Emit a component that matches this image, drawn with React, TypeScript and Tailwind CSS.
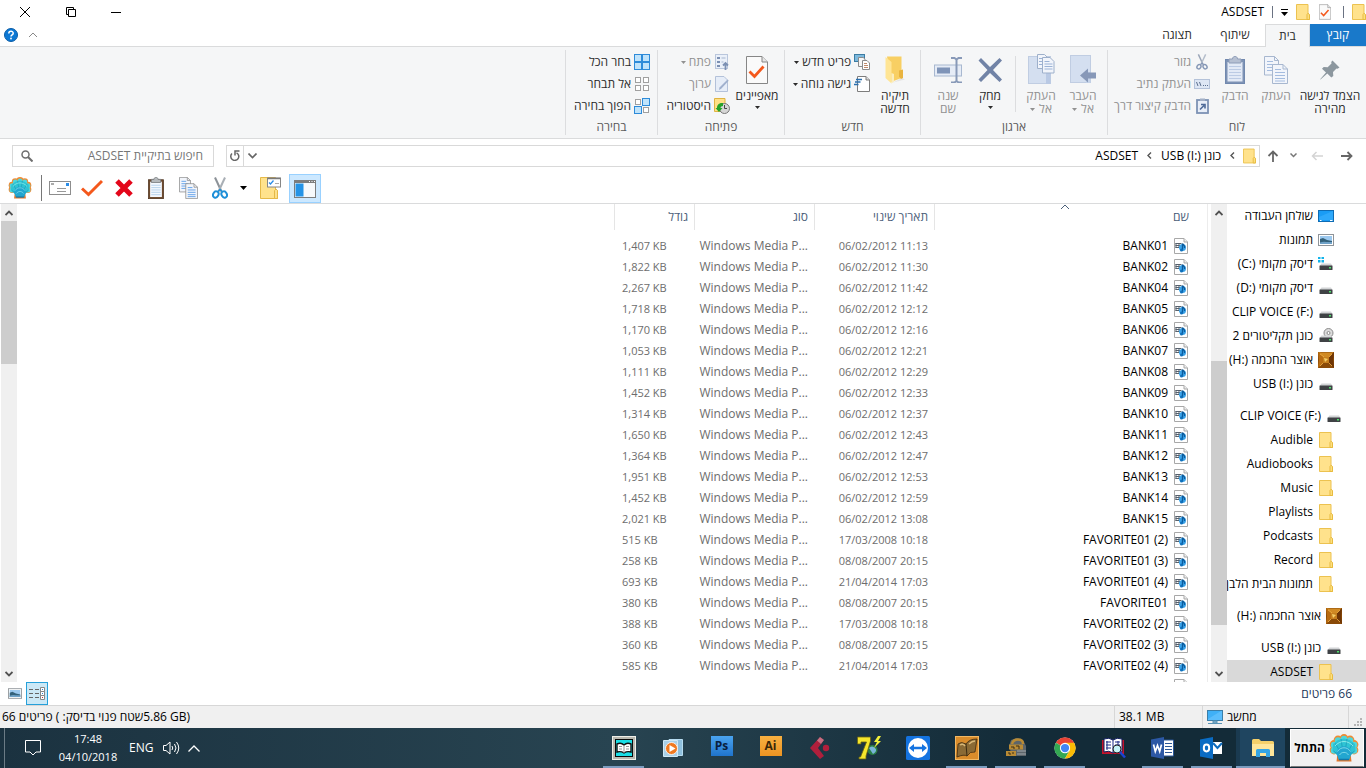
import React from "react";
import clsx from "clsx";

const LRM = "\u200e";

type IconProps = { className?: string };

/* ---------- small shared icons ---------- */

const FolderIcon: React.FC<IconProps> = ({ className }) => (
  <svg viewBox="0 0 14 16" className={clsx("shrink-0", className ?? "w-3.5 h-4")}>
    <path d="M0.500 0.500h11.500v9.500l1.500 1v4.500h-13z" fill="#ffe28c" stroke="#ecc250" />
    <path d="M11 15.500v-5l1-1.200 1.500 1.200v5z" fill="#fcdf80" stroke="#e8bb3f" />
  </svg>
);

const CaretIcon: React.FC<IconProps> = ({ className }) => (
  <svg viewBox="0 0 5 3" className={clsx("w-[5px] h-[3px] shrink-0", className)}>
    <path d="M0 0h5L2.500 3z" fill="currentColor" />
  </svg>
);

const ChevronIcon: React.FC<IconProps> = ({ className }) => (
  <svg viewBox="0 0 10 6" className={clsx("shrink-0", className ?? "w-2.5 h-1.5")} fill="none" stroke="currentColor">
    <path d="M1 1l4 4 4-4" />
  </svg>
);

const CrumbArrow = () => (
  <svg viewBox="0 0 5 7" className="w-[5px] h-[7px] shrink-0" fill="none" stroke="#555" strokeWidth="1.400">
    <path d="M4 0.500L1 3.500l3 3" />
  </svg>
);

const DriveIcon: React.FC<{ kind?: "windows" | "cd" }> = ({ kind }) => (
  <svg viewBox="0 0 16 16" className="w-4 h-4 shrink-0">
    {kind === "windows" && (
      <path d="M0 1h2.500v2H0zM3.500 1H6v2H3.500zM0 4h2.500v2.500H0zM3.500 4H6v2.500H3.500z" fill="#10b4ec" />
    )}
    {kind === "cd" && (
      <g>
        <circle cx="10.500" cy="5" r="4.500" fill="#dcdcdc" stroke="#8a8a8a" />
        <circle cx="10.500" cy="5" r="1.500" fill="#fff" stroke="#8a8a8a" />
      </g>
    )}
    <path d="M3.500 7.500h9.500l1.500 2.500h-13z" fill="#d2d4d6" />
    <rect x="1.500" y="9.500" width="13" height="4.500" rx="0.500" fill="#3f4245" />
    <rect x="11" y="11" width="2" height="1.500" fill="#4fe06b" />
  </svg>
);

const GemIcon = () => (
  <svg viewBox="0 0 16 16" className="w-4 h-4 shrink-0">
    <path d="M0 0h16v16H0z" fill="#8a4a08" />
    <path d="M0 0l5 5h6l5-5-3 0.500H3z" fill="#d08a24" />
    <path d="M0 0l5 5v6l-5 5 1-8z" fill="#b86c12" />
    <path d="M16 0l-5 5v6l5 5-1-8z" fill="#6e3505" />
    <path d="M5 5h6v6H5z" fill="#c57f1e" />
    <path d="M6 6l4 1-3 3z" fill="#f6d06a" />
    <path d="M2 2l4 3M14 2l-3 3M2 14l3-3M14 14l-3-3" stroke="#f3b347" strokeWidth="0.800" />
  </svg>
);

const DesktopIcon = () => (
  <svg viewBox="0 0 16 16" className="w-4 h-4 shrink-0">
    <rect x="0.500" y="2.500" width="15" height="11" fill="#1a9cf5" stroke="#0f6cb4" />
    <path d="M1 9L15 3v9H1z" fill="#3db2ff" opacity="0.600" />
    <path d="M2 12.500h1.500M12 12.500h2.500" stroke="#fff" />
  </svg>
);

const PictureIcon: React.FC<IconProps> = ({ className }) => (
  <svg viewBox="0 0 16 12" className={clsx("shrink-0", className ?? "w-4 h-3")}>
    <rect x="0.500" y="0.500" width="15" height="11" fill="#fff" stroke="#8f9499" />
    <rect x="2" y="2" width="12" height="8" fill="#9cc9ef" />
    <path d="M2 5l3-1 4 2 5 1v3H2z" fill="#34617a" />
    <path d="M2 8.500c4-1.500 7 0 12-0.500v2H2z" fill="#6fa2c8" />
  </svg>
);

const MediaFileIcon = () => (
  <svg viewBox="0 0 14 16" className="w-3.5 h-4 shrink-0">
    <path d="M0.500 0.500h9.500l3.500 3.500v11.500h-13z" fill="#fff" stroke="#a8a8a8" />
    <path d="M10 0.500v3.500h3.500" fill="#eee" stroke="#a8a8a8" />
    <path d="M1.500 5.500h6M1.500 7.500h5M1.500 9.500h4M2 5v5M5 5v5" stroke="#56616c" />
    <circle cx="8.500" cy="9.500" r="3.500" fill="#3ba4ea" />
    <path d="M8.500 12.500V5.500c0.500 1.500 2.800 1.800 2 4.500" stroke="#0c5b9c" strokeWidth="1.300" fill="none" />
    <circle cx="7.500" cy="12" r="1.500" fill="#0f6fba" />
  </svg>
);

const scallops: [number, number][] = [
  [5, 16],
  [5, 10.5],
  [9, 6],
  [15, 4.5],
  [21, 6],
  [25, 10.5],
  [25, 16],
];

const ShellIcon: React.FC<IconProps> = ({ className }) => (
  <svg viewBox="0 0 30 28" className={clsx("shrink-0", className)}>
    {scallops.map(([x, y]) => (
      <circle key={`${x}-${y}`} cx={x} cy={y} r="4.400" fill="#f08a32" />
    ))}
    <path d="M8.500 19h13l1 8.500h-15z" fill="#e0762a" />
    {scallops.map(([x, y]) => (
      <circle key={`${x}-${y}`} cx={x} cy={y + 0.5} r="3.200" fill="#4fd6dc" />
    ))}
    <path d="M3.500 17L4 10l5-4 6-1.500L21 6l5 4 0.500 7-5 4.500h-13z" fill="#2fc4d4" />
    <path
      d="M15 25L4.500 17M15 25L6.500 9.500M15 25L12 5M15 25l3-20M15 25l8.500-15.500M15 25l10.500-8"
      stroke="#1595b4"
      strokeWidth="0.700"
    />
    <path d="M7.500 19c1-9 14-9 15 0l-2 6.500h-11z" fill="#22a6d0" />
    <path d="M6 12c5-6 13-6 18 0" stroke="#9ff3ee" strokeWidth="0.800" fill="none" />
    <path d="M8.500 17.500c3-5 10-5 13 0M10.500 21c2-3.500 7-3.500 9 0" stroke="#8fe4ee" strokeWidth="0.800" fill="none" />
    <path d="M10 25.500h10" stroke="#1377a8" strokeWidth="1.500" />
  </svg>
);

const CheckPage: React.FC<IconProps> = ({ className }) => (
  <svg viewBox="0 0 22 28" className={clsx("shrink-0", className)}>
    <path d="M0.500 0.500h15.500l5.500 5.500v21.500h-21z" fill="#fafafa" stroke="#868686" />
    <path d="M16 0.500v5.500h5.500" fill="#e6e6e6" stroke="#868686" />
    <path d="M3.500 15.500l5 5 9-10" fill="none" stroke="#f4581c" strokeWidth="2.800" />
  </svg>
);

/* faded: the greyed ribbon version, otherwise the coloured toolbar one */
const PagesIcon: React.FC<{ className?: string; faded?: boolean }> = ({ className, faded }) => {
  const edge = faded ? "#a7b7cf" : "#8e8e8e";
  const line = faded ? "#a4bcdf" : "#4590e6";
  return (
    <svg viewBox="0 0 24 28" className={clsx("shrink-0", className)}>
      <path d="M0.500 0.500h10l4 4v14.500h-14z" fill="#f2f5fb" stroke={edge} />
      <path d="M10.500 0.500v4h4" fill="none" stroke={edge} />
      <path d="M3 5.500h6M3 8.500h9M3 11.500h9M3 14.500h9" stroke={line} />
      <path d="M8.500 8.500h10.500l4.500 4.500v14.500h-15z" fill="#f2f5fb" stroke={edge} />
      <path d="M19 8.500v4.500h4.500" fill="none" stroke={edge} />
      <path d="M11 13.500h6M11 16.500h10M11 19.500h10M11 22.500h10M11 25h10" stroke={line} />
    </svg>
  );
};

const ClipboardIcon: React.FC<{ className?: string; faded?: boolean }> = ({ className, faded }) => (
  <svg viewBox="0 0 20 28" className={clsx("shrink-0", className)}>
    <rect x="0.500" y="3.500" width="19" height="24" fill={faded ? "#7e93b5" : "#6e4a2d"} stroke={faded ? "#7188ae" : "#4f3420"} />
    <rect x="2.500" y="6" width="15" height="19.500" fill={faded ? "#e3eaf6" : "#f4f9ff"} />
    <path d="M4 10.500h12M4 13.500h12M4 16.500h12M4 19.500h12M4 22.500h12" stroke={faded ? "#bccbe4" : "#a9cbe8"} />
    <path d="M4 3h3.500c0-3.500 5-3.500 5 0H16v4H4z" fill={faded ? "#b6c0d2" : "#b5b9bc"} stroke={faded ? "#8e9db8" : "#75797c"} />
  </svg>
);

const ScissorsIcon: React.FC<{ className?: string; faded?: boolean }> = ({ className, faded }) => {
  const handle = faded ? "#8597b6" : "#1d8fd8";
  return (
    <svg viewBox="0 0 16 22" className={clsx("shrink-0", className)} fill="none">
      <path d="M3 0.500l6.500 14" stroke={faded ? "#9aa5b8" : "#8c9298"} strokeWidth="2" />
      <path d="M13 0.500l-6.500 14" stroke={faded ? "#b4bdcb" : "#a9afb5"} strokeWidth="2" />
      <ellipse cx="3.800" cy="17.500" rx="2.600" ry="3.200" transform="rotate(30 3.800 17.500)" stroke={handle} strokeWidth="2" />
      <ellipse cx="12.200" cy="17.500" rx="2.600" ry="3.200" transform="rotate(-30 12.200 17.500)" stroke={handle} strokeWidth="2" />
      <path d="M6 14.500l2-2 2 2" stroke={handle} strokeWidth="1.500" />
    </svg>
  );
};

/* ---------- ribbon ---------- */

interface BigButtonProps {
  icon: React.ReactNode;
  label: string;
  width: string;
  caret?: "inline" | "below";
  disabled?: boolean;
}

const BigButton: React.FC<BigButtonProps> = ({ icon, label, width, caret, disabled }) => (
  <button
    disabled={disabled}
    className={clsx("flex flex-col items-center shrink-0 leading-[13px]", width, disabled ? "text-[#919191]" : "text-[#2b2b2b]")}
  >
    <span className="h-[39px] flex items-center justify-center">{icon}</span>
    <span className="whitespace-pre-line">
      {label}
      {caret === "inline" && <CaretIcon className="inline mr-1 align-middle" />}
    </span>
    {caret === "below" && <CaretIcon className="mt-1" />}
  </button>
);

interface SmallButtonProps {
  icon: React.ReactNode;
  label: string;
  caret?: boolean;
  disabled?: boolean;
}

const SmallButton: React.FC<SmallButtonProps> = ({ icon, label, caret, disabled }) => (
  <button
    disabled={disabled}
    className={clsx("flex items-center h-[22px] gap-[3px] whitespace-nowrap", disabled ? "text-[#919191]" : "text-[#2b2b2b]")}
  >
    <span className="w-4 flex justify-center shrink-0">{icon}</span>
    {label}
    {caret && <CaretIcon />}
  </button>
);

const RibbonGroup: React.FC<{ label: string; width: string; children: React.ReactNode }> = ({ label, width, children }) => (
  <section className={clsx("flex flex-col shrink-0 my-[3px] border-l border-[#dcdddf]", width)}>
    <div className="flex h-[71px]">{children}</div>
    <div className="text-center leading-4 text-[#5a5a5a]">{label}</div>
  </section>
);

const PinIcon = () => (
  <svg viewBox="0 0 20 20" className="w-5 h-5">
    <path d="M12.500 0.500l7 7-2 1.200-1-0.200-3.500 3.500 0.300 4-2 1.500-4-4L0.500 19.500l-0.300-0.300L6 12.500l-4-3.800 1.700-1.700 4 0.200L11.500 3.500l-0.300-1.500z" fill="#8c979f" />
  </svg>
);

const PathIcon = () => (
  <svg viewBox="0 0 16 10" className="w-4 h-2.5">
    <rect x="0.500" y="0.500" width="15" height="9" fill="#dde6f4" stroke="#b4c2d9" />
    <path d="M2.500 3l1.500 4M5.500 3l1.500 4M9 6.500h1M11 6.500h1M13 6.500h1" stroke="#5c708f" />
  </svg>
);

const ShortcutIcon = () => (
  <svg viewBox="0 0 13 16" className="w-[13px] h-4">
    <rect x="1" y="2" width="11" height="13" fill="#e8eef8" stroke="#7d92b4" strokeWidth="1.800" />
    <path d="M4 0.500h5v2.500H4z" fill="#a3b0c6" />
    <path d="M4 11.500l4-4M5 6.500h4v4" stroke="#4e6a98" strokeWidth="1.600" fill="none" />
  </svg>
);

const MoveToIcon = () => (
  <svg viewBox="0 0 26 29" className="w-[26px] h-[29px]">
    <rect x="0.500" y="0.500" width="20" height="27" fill="#d4dff0" stroke="#c0cde2" />
    <path d="M16 28V17h4.500v11z" fill="#c5d3e9" />
    <path d="M10 20.500l8-7v4h8v6h-8v4z" fill="#8798b8" />
  </svg>
);

const CopyToIcon = () => (
  <svg viewBox="0 0 27 31" className="w-[27px] h-[31px]">
    <rect x="0.500" y="2.500" width="22" height="27" fill="#d4dff0" stroke="#c0cde2" />
    <path d="M18 30V19h4.500v11z" fill="#b9c9e4" />
    <path d="M9.500 0.500h7l3 3v11h-10z" fill="#f2f5fb" stroke="#9eb0cb" />
    <path d="M14.500 3.500h7.500l4 4v11.500h-11.500z" fill="#f2f5fb" stroke="#9eb0cb" />
    <path d="M11 4.500h3M11 7.500h3M11 10.500h3M16.500 7.500h5M16.500 10h8M16.500 12.500h8M16.500 15h8" stroke="#9cb3d6" />
  </svg>
);

const DeleteIcon = () => (
  <svg viewBox="0 0 26 26" className="w-[26px] h-[26px]">
    <path d="M1.500 3.500L4 1l9 9 9.500-9L25 3.500 16 13l9 9.500-2.500 2.500-9.500-9-9 9-2.500-2.500 9-9.500z" fill="#7183a6" />
  </svg>
);

const RenameIcon = () => (
  <svg viewBox="0 0 28 26" className="w-7 h-[26px]">
    <rect x="0.500" y="8" width="27" height="11" fill="#e6ecf6" stroke="#a8b8d0" />
    <rect x="3" y="10.500" width="13" height="6" fill="#7f94b8" />
    <path d="M17 1h3.500l2 1.500 2-1.500H28M17 25.500h3.500l2-1.500 2 1.500H28M22.500 2v22.500" stroke="#8899b8" strokeWidth="2" fill="none" />
  </svg>
);

const NewFolderIcon = () => (
  <svg viewBox="0 0 20 28" className="w-5 h-7">
    <path d="M17 22l3 1.500-12 3z" fill="#d8d8d8" opacity="0.600" />
    <path d="M2 0.500h14.500V22L6 26z" fill="#f8cf63" />
    <path d="M14 20.500v-6l4-1v8.500l-2 1z" fill="#e9b440" />
    <path d="M0.500 1L6.500 6v21.500L0.500 22z" fill="#ffe595" />
    <path d="M6.500 17v10.500l2.500-2V18z" fill="#fbedbd" />
  </svg>
);

const NewItemIcon = () => (
  <svg viewBox="0 0 16 16" className="w-4 h-4">
    <rect x="0.500" y="0.500" width="10" height="7" fill="#7db9dd" stroke="#3c7ca3" />
    <path d="M4.500 3.500h5l1.500 2v7h-6.500z" fill="#f7f7f7" stroke="#8b8b8b" />
    <path d="M8.500 6.500h4.500l2.500 2.500v6.500h-7z" fill="#fff" stroke="#8b8b8b" />
    <path d="M10 9.500h3M10 11.500h4M10 13.500h4" stroke="#c08a6a" />
  </svg>
);

const EasyAccessIcon = () => (
  <svg viewBox="0 0 16 16" className="w-4 h-4">
    <path d="M3.500 0.500h8.500l3.500 3.500v11.500h-12z" fill="#fff" stroke="#7d7d7d" />
    <path d="M12 0.500v3.500h3.500" fill="#ddd" stroke="#7d7d7d" />
    <path d="M2 3.500h6M1 6h5.500M0 8.500h4.500" stroke="#2a6fae" strokeWidth="1.300" />
  </svg>
);

const OpenIcon = () => (
  <svg viewBox="0 0 14 16" className="w-3.5 h-4">
    <rect x="0.500" y="0.500" width="12" height="14" fill="#eaf0f9" stroke="#b9c6dc" />
    <path d="M2 3h3v2H2zM2 7h3v2H2zM2 11h3v2H2z" fill="#7c90b3" />
    <path d="M6.500 4h4M6.500 8h2" stroke="#a5b5cf" />
    <path d="M10.500 16v-6M8 11.500L10.500 9l2.500 2.500" stroke="#7c90b3" strokeWidth="1.800" fill="none" />
  </svg>
);

const EditIcon = () => (
  <svg viewBox="0 0 14 16" className="w-3.5 h-4">
    <path d="M0.500 0.500h8.500l3.500 3.500v11.500h-12z" fill="#e6edf8" stroke="#b3c1d9" />
    <path d="M4 14l0.500-2.500 8-8 1.200 1.200-7.500 8z" fill="#9fb0cd" />
  </svg>
);

const HistoryIcon = () => (
  <svg viewBox="0 0 16 16" className="w-4 h-4">
    <path d="M0.500 0.500h10.500v13h-10.500z" fill="#ffe086" stroke="#dfb341" />
    <circle cx="10.500" cy="10.500" r="5" fill="#d6d6d6" stroke="#777" />
    <path d="M10.500 7v3.500h2.500" stroke="#444" fill="none" />
    <path d="M3 10c0-4 3-5.500 6-5v3C7 8 6.500 9 6.500 10H8.500l-3.500 4-3.500-4z" fill="#27a329" />
  </svg>
);

/* four boxes, each either picked or empty */
const SelectIcon: React.FC<{ picked: boolean[] }> = ({ picked }) => (
  <svg viewBox="0 0 16 16" className="w-4 h-4">
    {picked.map((on, i) => {
      const x = i % 2 === 0 ? 0.5 : 8.5;
      const y = i < 2 ? 0.5 : 8.5;
      return on ? (
        <rect key={i} x={x} y={y} width="7" height="7" fill="#bfe3fb" stroke="#2d8bd9" />
      ) : (
        <rect key={i} x={x + 1} y={y + 1} width="5" height="5" fill="#fff" stroke="#a0a0a0" />
      );
    })}
  </svg>
);

const Ribbon = () => (
  <div className="flex h-[93px] shrink-0 bg-[#f5f6f7] border-y border-[#dadbdc] overflow-hidden">
    <RibbonGroup label="לוח" width="w-[259px]">
      <BigButton width="w-[72px]" icon={<PinIcon />} label={"הצמד לגישה\nמהירה"} />
      <BigButton width="w-9" disabled icon={<PagesIcon faded className="w-6 h-7" />} label="העתק" />
      <BigButton width="w-[46px]" disabled icon={<ClipboardIcon faded className="w-5 h-7" />} label="הדבק" />
      <div className="flex flex-col pt-px pr-0.5">
        <SmallButton disabled icon={<ScissorsIcon faded className="w-3 h-4" />} label="גזור" />
        <SmallButton disabled icon={<PathIcon />} label="העתק נתיב" />
        <SmallButton disabled icon={<ShortcutIcon />} label="הדבק קיצור דרך" />
      </div>
    </RibbonGroup>

    <RibbonGroup label="ארגון" width="w-[187px]">
      <BigButton width="w-12" disabled caret="inline" icon={<MoveToIcon />} label={"העבר\nאל"} />
      <BigButton width="w-9" disabled caret="inline" icon={<CopyToIcon />} label={"העתק\nאל"} />
      <div className="w-px h-14 mt-1.5 mr-[7px] ml-[3px] bg-[#dcdddf]" />
      <BigButton width="w-11" caret="below" icon={<DeleteIcon />} label="מחק" />
      <BigButton width="w-10" disabled icon={<RenameIcon />} label={"שנה\nשם"} />
    </RibbonGroup>

    <RibbonGroup label="חדש" width="w-[136px]">
      <BigButton width="w-[50px]" icon={<NewFolderIcon />} label={"תיקיה\nחדשה"} />
      <div className="flex flex-col pt-px">
        <SmallButton caret icon={<NewItemIcon />} label="פריט חדש" />
        <SmallButton caret icon={<EasyAccessIcon />} label="גישה נוחה" />
      </div>
    </RibbonGroup>

    <RibbonGroup label="פתיחה" width="w-[127px]">
      <BigButton width="w-[54px]" caret="below" icon={<CheckPage className="w-[22px] h-7" />} label="מאפיינים" />
      <div className="flex flex-col pt-px">
        <SmallButton disabled caret icon={<OpenIcon />} label="פתח" />
        <SmallButton disabled icon={<EditIcon />} label="ערוך" />
        <SmallButton icon={<HistoryIcon />} label="היסטוריה" />
      </div>
    </RibbonGroup>

    <RibbonGroup label="בחירה" width="w-[92px]">
      <div className="flex flex-col pt-px pr-[7px]">
        <SmallButton icon={<SelectIcon picked={[true, true, true, true]} />} label="בחר הכל" />
        <SmallButton icon={<SelectIcon picked={[false, false, false, false]} />} label="אל תבחר" />
        <SmallButton icon={<SelectIcon picked={[false, true, true, false]} />} label="הפוך בחירה" />
      </div>
    </RibbonGroup>
  </div>
);

/* ---------- title bar + tabs ---------- */

const TitleBar = () => (
  <header className="flex h-6 shrink-0 items-center">
    <div className="flex items-center gap-2 h-full">
      <FolderIcon />
      <span className="w-px h-3 bg-gray-500" />
      <button aria-label="מאפיינים" className="mr-1">
        <CheckPage className="w-3 h-4" />
      </button>
      <button aria-label="תיקיה חדשה" className="mr-px">
        <FolderIcon />
      </button>
      <button aria-label="התאמה אישית" className="flex flex-col items-center gap-0.5 w-[7px]">
        <span className="w-[7px] h-px bg-black" />
        <svg viewBox="0 0 7 4" className="w-[7px] h-1">
          <path d="M0 0h7L3.500 4z" />
        </svg>
      </button>
      <span className="w-px h-3 bg-gray-500" />
      <h1>ASDSET</h1>
    </div>
    <div className="flex mr-auto h-full">
      <button aria-label="מזעור" className="w-12 flex items-center justify-center">
        <span className="w-2.5 h-px bg-black" />
      </button>
      <button aria-label="שחזור" className="w-[42px] flex items-center justify-center">
        <svg viewBox="0 0 10 10" className="w-2.5 h-2.5" fill="none" stroke="#000">
          <path d="M2.500 2.500h7v7h-7zM2.500 7.500h-2v-7h7v2" />
        </svg>
      </button>
      <button aria-label="סגירה" className="w-[50px] flex items-center justify-center">
        <svg viewBox="0 0 10 10" className="w-2.5 h-2.5" fill="none" stroke="#000">
          <path d="M0 0l10 10M10 0L0 10" />
        </svg>
      </button>
    </div>
  </header>
);

const TabStrip = () => (
  <nav className="flex h-[22px] shrink-0">
    <button className="w-14 bg-[#1979ca] text-white">קובץ</button>
    <button className="w-[45px] -mb-px relative bg-[#f5f6f7] border border-b-0 border-[#dadbdc] text-[#2b2b2b]">בית</button>
    <button className="w-[60px] text-[#2b2b2b]">שיתוף</button>
    <button className="w-14 text-[#2b2b2b]">תצוגה</button>
    <div className="flex items-center gap-2.5 mr-auto pl-1">
      <button aria-label="מזער רצועה" className="text-[#888]">
        <ChevronIcon className="w-2.5 h-1.5 rotate-180" />
      </button>
      <button aria-label="עזרה">
        <svg viewBox="0 0 14 14" className="w-3.5 h-3.5">
          <circle cx="7" cy="7" r="6.500" fill="#0c78d4" stroke="#0a5ca6" />
          <path d="M4.800 5.500c0-3 4.400-2.800 4.400-0.300 0 1.600-2.200 1.600-2.200 3.300" stroke="#fff" strokeWidth="1.500" fill="none" />
          <circle cx="7" cy="10.500" r="0.900" fill="#fff" />
        </svg>
      </button>
    </div>
  </nav>
);

/* ---------- address row ---------- */

const AddressRow = () => (
  <div className="flex items-center h-[33px] shrink-0 pl-3 pr-[11px]">
    <button aria-label="אחורה" className="w-4">
      <svg viewBox="0 0 12 10" className="w-3 h-2.5 mx-auto" fill="none" stroke="#666" strokeWidth="1.800">
        <path d="M0 5h10.500M6.500 1l4 4-4 4" />
      </svg>
    </button>
    <button aria-label="קדימה" className="w-4 mr-3.5">
      <svg viewBox="0 0 12 10" className="w-3 h-2.5 mx-auto" fill="none" stroke="#d4d4d4" strokeWidth="1.500">
        <path d="M12 5H1.500M5.500 1l-4 4 4 4" />
      </svg>
    </button>
    <button aria-label="מיקומים אחרונים" className="mr-3 text-[#777]">
      <svg viewBox="0 0 7 5" className="w-[7px] h-[5px]" fill="none" stroke="currentColor" strokeWidth="1.500">
        <path d="M0.500 0.500l3 3 3-3" />
      </svg>
    </button>
    <button aria-label="למעלה" className="mr-[11px]">
      <svg viewBox="0 0 12 12" className="w-3 h-3" fill="none" stroke="#666" strokeWidth="1.800">
        <path d="M6 12V1.500M1.500 6L6 1.500 10.500 6" />
      </svg>
    </button>

    <div className="flex flex-1 items-center h-[22px] mr-[7px] border border-[#d9d9d9] min-w-0">
      <FolderIcon className="w-[13px] h-4 mr-[3px]" />
      <div className="flex items-center gap-[9px] mr-2">
        <CrumbArrow />
        <a href="#usb" className="text-black">
          {`כונן USB (I:)${LRM}`}
        </a>
        <CrumbArrow />
        <a href="#asdset" className="text-black">
          ASDSET
        </a>
      </div>
      <button aria-label="מיקומים קודמים" className="mr-auto w-4 flex justify-center text-[#666]">
        <svg viewBox="0 0 9 6" className="w-[9px] h-1.5" fill="none" stroke="currentColor" strokeWidth="1.600">
          <path d="M0.500 0.500l4 4 4-4" />
        </svg>
      </button>
      <button aria-label="רענן" className="w-[17px] h-full flex items-center justify-center border-r border-[#d9d9d9]">
        <svg viewBox="0 0 10 11" className="w-2.5 h-[11px]" fill="none" stroke="#666" strokeWidth="1.500">
          <path d="M2 3.500A4 4 0 1 0 6.500 2.800" />
          <path d="M5 5.500V1h4.500" />
        </svg>
      </button>
    </div>

    <label className="flex items-center w-[202px] h-[22px] mr-3 pr-2.5 pl-2 border border-[#d9d9d9]">
      <input
        type="text"
        aria-label="חיפוש"
        placeholder="חיפוש בתיקיית ASDSET"
        className="flex-1 min-w-0 bg-transparent outline-none placeholder:text-[#767676]"
      />
      <svg viewBox="0 0 12 12" className="w-3 h-3 shrink-0" fill="none" stroke="#6e6e6e">
        <circle cx="4.500" cy="4.500" r="3.500" strokeWidth="1.500" />
        <path d="M7 7l4.500 4.500" strokeWidth="2" />
      </svg>
    </label>
  </div>
);

/* ---------- shell toolbar ---------- */

const TOOL = "w-8 h-[30px] flex items-center justify-center shrink-0";

const ShellToolbar = () => (
  <div dir="ltr" className="flex items-center h-8 shrink-0 pl-1 pt-px border-b border-[#dadbdc]">
    <button aria-label="Classic Shell" className={TOOL}>
      <ShellIcon className="w-6 h-[22px]" />
    </button>
    <span className="w-px h-[26px] ml-[5px] mr-0.5 bg-[#777]" />
    <button aria-label="Rename" className={TOOL}>
      <svg viewBox="0 0 22 14" className="w-[22px] h-3.5">
        <rect x="0.500" y="0.500" width="21" height="13" fill="#fff" stroke="#8d8d8d" />
        <path d="M2 3.500h3M2 2.500h3" stroke="#aaa" />
        <rect x="17" y="2" width="3" height="3" fill="#2a8de8" />
        <path d="M8 7.500h9M8 10.500h9" stroke="#999" />
      </svg>
    </button>
    <button aria-label="Properties" className={TOOL}>
      <svg viewBox="0 0 22 18" className="w-[22px] h-[18px]">
        <path d="M1 9.500l6.500 6L21 2" fill="none" stroke="#f4581c" strokeWidth="3" />
      </svg>
    </button>
    <button aria-label="Delete" className={TOOL}>
      <svg viewBox="0 0 20 20" className="w-5 h-5">
        <path d="M3 3l14 14M17 3L3 17" stroke="#e3061a" strokeWidth="5" />
      </svg>
    </button>
    <button aria-label="Paste" className={TOOL}>
      <ClipboardIcon className="w-4 h-[22px]" />
    </button>
    <button aria-label="Copy" className={TOOL}>
      <PagesIcon className="w-[19px] h-[22px]" />
    </button>
    <button aria-label="Cut" className={TOOL}>
      <ScissorsIcon className="w-4 h-[22px]" />
    </button>
    <button aria-label="More" className="w-[15px] flex justify-center">
      <svg viewBox="0 0 7 4" className="w-[7px] h-1">
        <path d="M0 0h7L3.500 4z" />
      </svg>
    </button>
    <button aria-label="Folder options" className="w-[38px] h-[30px] flex items-center justify-center">
      <svg viewBox="0 0 21 22" className="w-[21px] h-[22px]">
        <path d="M0.500 0.500h15v12l2 1v8h-17z" fill="#ffe28c" stroke="#e5b948" />
        <path d="M14.500 21.500v-8l1.500-1.500 1.500 1.500v8z" fill="#fce08a" stroke="#e5b948" />
        <rect x="7.500" y="1" width="13" height="9" fill="#fff" stroke="#868686" />
        <path d="M7.500 1.500h13" stroke="#7a7a7a" strokeWidth="1.500" />
        <path d="M9 5.500l1.500 1.500 3-3.500" stroke="#2a8de8" strokeWidth="1.300" fill="none" />
        <path d="M15 6.500h4" stroke="#aaa" />
      </svg>
    </button>
    <button aria-label="Navigation pane" aria-pressed className="w-8 h-[29px] self-end flex items-center justify-center bg-[#cce8ff] border border-[#99d1ff]">
      <svg viewBox="0 0 22 18" className="w-[22px] h-[18px]">
        <rect x="0.500" y="0.500" width="21" height="17" fill="#f7f9fb" stroke="#7d7d7d" />
        <path d="M0 1.500h22" stroke="#7d7d7d" strokeWidth="3" />
        <path d="M15 1.500h1M17.500 1.500h1M20 1.500h1" stroke="#fff" />
        <rect x="1.500" y="3.500" width="8" height="13" fill="#2593e6" />
      </svg>
    </button>
  </div>
);

/* ---------- body ---------- */

const Scrollbar: React.FC<{ gap: string; thumb: string }> = ({ gap, thumb }) => (
  <div className="w-4 shrink-0 flex flex-col items-center bg-[#f0f0f0] text-[#505050]">
    <div className="h-[17px] flex items-center">
      <svg viewBox="0 0 8 6" className="w-2 h-1.5" fill="none" stroke="currentColor" strokeWidth="1.800">
        <path d="M0.500 5L4 1.500 7.500 5" />
      </svg>
    </div>
    <div className={gap} />
    <div className={clsx("w-full bg-[#cdcdcd]", thumb)} />
    <div className="h-[17px] mt-auto flex items-center">
      <svg viewBox="0 0 8 6" className="w-2 h-1.5" fill="none" stroke="currentColor" strokeWidth="1.800">
        <path d="M0.500 1L4 4.500 7.500 1" />
      </svg>
    </div>
  </div>
);

interface NavItem {
  label: string;
  icon: React.ReactNode;
  root?: boolean;
  selected?: boolean;
}

const navItems: NavItem[] = [
  { label: "שולחן העבודה", icon: <DesktopIcon /> },
  { label: "תמונות", icon: <PictureIcon /> },
  { label: `דיסק מקומי (C:${LRM})`, icon: <DriveIcon kind="windows" /> },
  { label: `דיסק מקומי (D:${LRM})`, icon: <DriveIcon /> },
  { label: `CLIP VOICE (F:)${LRM}`, icon: <DriveIcon /> },
  { label: "כונן תקליטורים 2", icon: <DriveIcon kind="cd" /> },
  { label: `אוצר החכמה (H:${LRM})`, icon: <GemIcon /> },
  { label: `כונן USB (I:)${LRM}`, icon: <DriveIcon /> },
  { label: `CLIP VOICE (F:)${LRM}`, icon: <DriveIcon />, root: true },
  { label: "Audible", icon: <FolderIcon /> },
  { label: "Audiobooks", icon: <FolderIcon /> },
  { label: "Music", icon: <FolderIcon /> },
  { label: "Playlists", icon: <FolderIcon /> },
  { label: "Podcasts", icon: <FolderIcon /> },
  { label: "Record", icon: <FolderIcon /> },
  { label: "תמונות הבית הלבן", icon: <FolderIcon /> },
  { label: `אוצר החכמה (H:${LRM})`, icon: <GemIcon />, root: true },
  { label: `כונן USB (I:)${LRM}`, icon: <DriveIcon />, root: true },
  { label: "ASDSET", icon: <FolderIcon />, selected: true },
];

const NavPane = () => (
  <aside className="flex w-[159px] shrink-0 border-l border-[#ececec]">
    <ul className="w-[139px] overflow-hidden">
      {navItems.map((item, i) => (
        <li
          key={i}
          className={clsx(
            "flex items-center h-6 gap-[5px] whitespace-nowrap text-black",
            item.root ? "mt-2 pr-6" : "pr-8",
            item.selected && "bg-[#d9d9d9]"
          )}
        >
          <span className="w-4 flex justify-center shrink-0">{item.icon}</span>
          {item.label}
        </li>
      ))}
    </ul>
    <Scrollbar gap="h-[140px] shrink-0" thumb="h-[264px]" />
  </aside>
);

const files: [string, string, string][] = [
  ["BANK01", "06/02/2012 11:13", "1,407 KB"],
  ["BANK02", "06/02/2012 11:30", "1,822 KB"],
  ["BANK04", "06/02/2012 11:42", "2,267 KB"],
  ["BANK05", "06/02/2012 12:12", "1,718 KB"],
  ["BANK06", "06/02/2012 12:16", "1,170 KB"],
  ["BANK07", "06/02/2012 12:21", "1,053 KB"],
  ["BANK08", "06/02/2012 12:29", "1,111 KB"],
  ["BANK09", "06/02/2012 12:33", "1,452 KB"],
  ["BANK10", "06/02/2012 12:37", "1,314 KB"],
  ["BANK11", "06/02/2012 12:43", "1,650 KB"],
  ["BANK12", "06/02/2012 12:47", "1,364 KB"],
  ["BANK13", "06/02/2012 12:53", "1,951 KB"],
  ["BANK14", "06/02/2012 12:59", "1,452 KB"],
  ["BANK15", "06/02/2012 13:08", "2,021 KB"],
  ["FAVORITE01 (2)", "17/03/2008 10:18", "515 KB"],
  ["FAVORITE01 (3)", "08/08/2007 20:15", "258 KB"],
  ["FAVORITE01 (4)", "21/04/2014 17:03", "693 KB"],
  ["FAVORITE01", "08/08/2007 20:15", "380 KB"],
  ["FAVORITE02 (2)", "17/03/2008 10:18", "388 KB"],
  ["FAVORITE02 (3)", "08/08/2007 20:15", "360 KB"],
  ["FAVORITE02 (4)", "21/04/2014 17:03", "585 KB"],
];

const HEAD = "h-[26px] p-0 pr-1.5 font-normal text-right border-l border-[#e5e5e5]";

const FileList = () => (
  <main className="flex-1 min-w-0 overflow-hidden">
    <table className="w-full table-fixed border-separate border-spacing-0">
      <colgroup>
        <col className="w-[273px]" />
        <col className="w-[120px]" />
        <col className="w-[120px]" />
        <col className="w-20" />
        <col />
      </colgroup>
      <thead className="text-[#4c607a]">
        <tr>
          <th className={clsx(HEAD, "relative pr-[18px]")}>
            שם
            <ChevronIcon className="absolute top-0 left-[125px] w-2.5 h-1.5 rotate-180" />
          </th>
          <th className={HEAD}>תאריך שינוי</th>
          <th className={HEAD}>סוג</th>
          <th className={HEAD}>גודל</th>
          <th />
        </tr>
        <tr className="h-[5px]" />
      </thead>
      <tbody className="text-[#6d6d6d]">
        {files.map(([name, date, size]) => (
          <tr key={name} className="h-[21px] whitespace-nowrap">
            <td className="p-0 pr-[19px]">
              <div className="flex items-center gap-1.5 text-black">
                <MediaFileIcon />
                <span dir="ltr">{name}</span>
              </div>
            </td>
            <td className="p-0 pr-1.5 text-[11px]">
              <span dir="ltr">{date}</span>
            </td>
            <td className="p-0 pr-1.5">
              <span dir="ltr">Windows Media P...</span>
            </td>
            <td className="p-0 pl-2 text-left text-[11px]">
              <span dir="ltr">{size}</span>
            </td>
            <td />
          </tr>
        ))}
        <tr className="h-[21px]">
          <td className="p-0 pr-[19px]">
            <MediaFileIcon />
          </td>
        </tr>
      </tbody>
    </table>
  </main>
);

/* ---------- status bars ---------- */

const ItemBar = () => (
  <div className="flex items-center h-[23px] shrink-0 pr-3.5 pl-2">
    <span className="text-[#1e395b]">66 פריטים</span>
    <div className="flex items-center mr-auto">
      <button aria-label="פרטים" aria-pressed className="w-[22px] h-[23px] ml-1 flex items-center justify-center bg-[#cbe8f6] border border-[#26a0da]">
        <svg viewBox="0 0 16 14" className="w-4 h-3.5" fill="none" stroke="#666">
          <path d="M0 2.500h4M6 2.500h4M0 6.500h4M6 6.500h4M0 10.500h4M6 10.500h4" />
          <path d="M11.500 0.500h4v4h-4zM11.500 4.500h4v4h-4zM11.500 8.500h4v4h-4z" fill="#fff" stroke="#888" />
          <path d="M13 2.500h1M13 6.500h1" stroke="#2f7fcf" />
          <path d="M13 10.500h1" stroke="#c33" />
        </svg>
      </button>
      <button aria-label="תמונות ממוזערות">
        <PictureIcon className="w-3.5 h-[11px]" />
      </button>
    </div>
  </div>
);

const StatusBar = () => (
  <footer className="flex h-[23px] shrink-0 bg-[#f0f0f0] border-t border-[#d7d7d7] text-black">
    <div className="w-[17px] flex items-end justify-center pb-0.5">
      <svg viewBox="0 0 8 8" className="w-2 h-2" fill="#b5b5b5">
        <path d="M6 0h2v2H6zM3 3h2v2H3zM6 3h2v2H6zM0 6h2v2H0zM3 6h2v2H3zM6 6h2v2H6z" />
      </svg>
    </div>
    <div dir="ltr" className="flex items-center gap-1 w-[147px] pl-1 border-x border-[#d7d7d7]">
      <svg viewBox="0 0 16 15" className="w-4 h-[15px] shrink-0">
        <rect x="0.500" y="0.500" width="15" height="10" fill="#3fb0f7" stroke="#3b7ea8" />
        <path d="M1 9L14 1h1v9H1z" fill="#6cc6ff" opacity="0.600" />
        <path d="M6 11h4v2H6zM1 13.500h14" stroke="#5a94b5" fill="#8cb6cd" />
      </svg>
      <span>מחשב</span>
    </div>
    <div dir="ltr" className="flex items-center w-[88px] pl-1 border-l border-[#d7d7d7]">
      38.1 MB
    </div>
    <div dir="ltr" className="flex-1 flex items-center pl-0.5 whitespace-pre">
      66 <bdi>פריטים</bdi> ( <bdi dir="rtl">שטח פנוי בדיסק:</bdi>5.86 GB)
    </div>
  </footer>
);

/* ---------- taskbar ---------- */

const ExplorerIcon = () => (
  <svg viewBox="0 0 22 18" className="w-[22px] h-[18px]">
    <path d="M0 1.500Q0 0 1.500 0H7l2 2h11.500Q22 2 22 3.500V17H0z" fill="#f5d06a" />
    <path d="M0 5h22v12H0z" fill="#ffe69a" />
    <path d="M4 18v-6.500Q4 10 5.500 10h11q1.500 0 1.500 1.500V18h-4v-4H8v4z" fill="#35a5e5" />
  </svg>
);

const OutlookIcon = () => (
  <svg viewBox="0 0 23 22" className="w-[23px] h-[22px]">
    <path d="M13 5h9v12h-9z" fill="#fff" />
    <path d="M13 6l4.500 5L22 6" fill="none" stroke="#0f6cbd" strokeWidth="2" />
    <path d="M0 2.500L13 0v22L0 19.500z" fill="#0a6cc4" />
    <ellipse cx="6.500" cy="11" rx="2.700" ry="3.400" fill="none" stroke="#fff" strokeWidth="2" />
  </svg>
);

const WordIcon = () => (
  <svg viewBox="0 0 23 22" className="w-[23px] h-[22px]">
    <path d="M12 3h10.500v16H12z" fill="#fff" stroke="#2b5797" />
    <path d="M14 6.500h7M14 9.500h7M14 12.500h7M14 15.500h7" stroke="#2b5797" />
    <path d="M0 2.500L13 0v22L0 19.500z" fill="#2c58a5" />
    <path d="M2.500 7.500l1.800 7 2.200-6 2.200 6 1.800-7" fill="none" stroke="#fff" strokeWidth="1.700" />
  </svg>
);

const BookSearchIcon = () => (
  <svg viewBox="0 0 24 22" className="w-6 h-[22px]">
    <path d="M0 3h22v14H0z" fill="#c3142a" />
    <path d="M2 2q5-2 9 1 4-3 9-1v13q-5-2-9 1-4-3-9-1z" fill="#fff" stroke="#0f1a5c" />
    <path d="M11 3v13M4 5h5M4 8h5M4 11h5M13 5h5M13 8h5M5 4v9M16 4v7" stroke="#1b2a86" />
    <circle cx="15" cy="12" r="4" fill="#c4f3f7" stroke="#222" />
    <path d="M18 15l5 5.500" stroke="#1e44d2" strokeWidth="2.500" />
  </svg>
);

const ChromeIcon = () => (
  <svg viewBox="0 0 24 24" className="w-[22px] h-[22px]">
    <circle cx="12" cy="12" r="11.500" fill="#fff" />
    <path d="M12 12L2.040 6.250A11.500 11.500 0 0 1 21.960 6.250z" fill="#ea4335" />
    <path d="M2.040 6.250A11.500 11.500 0 0 0 12 23.500L17 14.900 12 12z" fill="#34a853" />
    <path d="M21.960 6.250A11.500 11.500 0 0 1 12 23.500l5-8.600V9.100L12 6.250z" fill="#fbbc05" />
    <circle cx="12" cy="12" r="5.600" fill="#fff" />
    <circle cx="12" cy="12" r="4.500" fill="#4285f4" />
  </svg>
);

const LockBookIcon = () => (
  <svg viewBox="0 0 22 20" className="w-[22px] h-5">
    <path d="M4 8l2-6 6-2 6 2 3 6v10H7z" fill="#5d656a" />
    <path d="M7 6Q8 1.500 13 1.500T18 6" fill="none" stroke="#b98b35" strokeWidth="2.500" />
    <path d="M4 6.500h14v5H4zM1 13h10v5H1z" fill="#b98b35" />
    <path d="M6 9h3v2M11 8h3v3M3 15h2v2M7 15h2" stroke="#3c2f18" fill="none" />
    <path d="M12 13h9M12 16h9" stroke="#8a9196" strokeWidth="1.500" />
  </svg>
);

const ParchmentIcon = () => (
  <svg viewBox="0 0 24 24" className="w-6 h-6">
    <rect x="0.500" y="0.500" width="23" height="23" fill="#d98c2b" stroke="#f2b863" />
    <path d="M3 8q3-3 8 0 3-5 11-5l-2 13q-5-1-8 4-3-2-10 1z" fill="#8a6a35" stroke="#3c2a10" strokeWidth="0.800" />
    <path d="M11 8l1 12" stroke="#3c2a10" />
    <path d="M5 9q3-2 5 1M14 8q3-3 6-3" stroke="#d9b878" strokeWidth="1.500" fill="none" />
  </svg>
);

const TeamViewerIcon = () => (
  <svg viewBox="0 0 24 24" className="w-6 h-6">
    <rect width="24" height="24" rx="1.500" fill="#1473e0" />
    <circle cx="12" cy="12" r="10" fill="#fff" />
    <path d="M3 12l5-4v2.800h8V8l5 4-5 4v-2.800H8V16z" fill="#1473e0" />
  </svg>
);

const SevenIcon = () => (
  <svg viewBox="0 0 24 24" className="w-6 h-6">
    <circle cx="15.500" cy="14" r="5" fill="#2a7d46" />
    <path d="M12 12q3-3 6 0t-2 6" fill="#78b4d8" />
    <path d="M0.500 1h13v4L9 20v3H2v-2h1.500L9.500 6H4v2H0.500z" fill="#f5e62c" stroke="#6b6212" strokeWidth="0.800" />
    <path d="M21 0l-4 6h3l-3 6 7-7h-3l3-5z" fill="#f2f03a" />
  </svg>
);

const RedDiamondIcon = () => (
  <svg viewBox="0 0 20 22" className="w-5 h-[22px]">
    <path d="M10 0l4 3-6 8 6 8-4 3L0 11z" fill="#b01f3c" />
    <path d="M10 0l4 3-3 4-4-3.500z" fill="#d8a3af" opacity="0.600" />
    <circle cx="16" cy="11" r="3.200" fill="#b01f3c" />
  </svg>
);

const AdobeIcon: React.FC<{ text: string; className: string }> = ({ text, className }) => (
  <span className={clsx("w-[22px] h-5 -mt-1 flex items-center justify-center bg-linear-to-b text-xs font-bold", className)}>
    {text}
  </span>
);

const MediaPlayerIcon = () => (
  <svg viewBox="0 0 20 19" className="w-5 h-[19px]">
    <path d="M6 0.500h13.500v16H6z" fill="#8fc0de" stroke="#b7dcf0" />
    <path d="M0.500 1.500h14v16H0.500z" fill="#a9d0e8" stroke="#d1e9f6" />
    <circle cx="8.500" cy="9.500" r="6" fill="#f07a22" stroke="#fff" strokeWidth="0.800" />
    <path d="M6.500 6l6 3.500-6 3.500z" fill="#fff" />
  </svg>
);

const BookFrameIcon = () => (
  <svg viewBox="0 0 24 24" className="w-6 h-6">
    <rect x="0.500" y="0.500" width="23" height="23" fill="#b9b9b0" stroke="#efefe8" />
    <rect x="3.500" y="3.500" width="17" height="17" fill="#19dfe6" stroke="#0c0c0c" />
    <path d="M5 8q4-2 7 1 3-3 7-1v8q-4-1-7 1-3-2-7-1z" fill="#fff" stroke="#111" strokeWidth="1.400" />
    <path d="M12 9v8M7 10.500h3M7 13h3M14 10.500h3M14 13h3" stroke="#999" />
  </svg>
);

interface TaskApp {
  name: string;
  icon: React.ReactNode;
  running?: boolean;
  active?: boolean;
}

const apps: TaskApp[] = [
  { name: "Explorer", icon: <ExplorerIcon />, running: true, active: true },
  { name: "Outlook", icon: <OutlookIcon />, running: true },
  { name: "Word", icon: <WordIcon />, running: true },
  { name: "Book search", icon: <BookSearchIcon /> },
  { name: "Chrome", icon: <ChromeIcon />, running: true },
  { name: "Library", icon: <LockBookIcon />, running: true },
  { name: "Parchment", icon: <ParchmentIcon />, running: true },
  { name: "TeamViewer", icon: <TeamViewerIcon /> },
  { name: "Seven", icon: <SevenIcon /> },
  { name: "Cubase", icon: <RedDiamondIcon /> },
  { name: "Illustrator", icon: <AdobeIcon text="Ai" className="from-[#f8b040] to-[#ec9422] text-[#3a2608]" /> },
  { name: "Photoshop", icon: <AdobeIcon text="Ps" className="from-[#4aa4f0] to-[#1f74cc] text-[#0a1f3d]" /> },
  { name: "Media Player", icon: <MediaPlayerIcon /> },
  { name: "Books", icon: <BookFrameIcon />, running: true },
];

const Taskbar = () => (
  <div className="flex h-10 shrink-0 bg-linear-to-r from-[#1b3240] via-[#284451] via-45% to-[#132b38] to-75% text-white">
    <div className="w-[81px] shrink-0 flex items-center pr-0.5">
      <button className="flex items-center gap-1 w-[74px] h-[38px] pr-1 bg-[#f0f0f0] border border-white border-b-[#777] text-black font-bold">
        <ShellIcon className="w-[30px] h-7" />
        התחל
      </button>
    </div>
    {apps.map((app) => (
      <button
        key={app.name}
        aria-label={app.name}
        className={clsx(
          "relative w-[49px] shrink-0 flex items-center justify-center",
          app.active && "bg-[#1f4560] border-l-4 border-[#1a3a50]"
        )}
      >
        {app.icon}
        {app.running && (
          <span className={clsx("absolute bottom-0 h-0.5 bg-[#7b9cbf]", app.active ? "-left-1 right-0" : "left-1 right-1")} />
        )}
      </button>
    ))}

    <div dir="ltr" className="flex items-center mr-auto">
      <span className="w-px h-full ml-1 bg-[#6b7b85]" />
      <button aria-label="Notifications" className="ml-5 w-4">
        <svg viewBox="0 0 16 16" className="w-4 h-4" fill="none" stroke="#fff">
          <path d="M0.500 0.500h15v11.500H11L8 15l-3-3H0.500z" />
        </svg>
      </button>
      <div className="w-[82px] ml-1.5 text-center text-[11px] leading-[18px]">
        <div>17:48</div>
        <div>04/10/2018</div>
      </div>
      <button className="w-6">ENG</button>
      <button aria-label="Volume" className="ml-2.5">
        <svg viewBox="0 0 17 14" className="w-[17px] h-3.5" fill="none" stroke="#fff">
          <path d="M0.500 4.500h2.500l4-3.500v12l-4-3.500H0.500z" />
          <path d="M9 5q1.500 2 0 4M11.500 3q3 4 0 8M13.500 1q4.500 6 0 12" />
        </svg>
      </button>
      <button aria-label="Hidden icons" className="ml-2">
        <svg viewBox="0 0 12 7" className="w-3 h-[7px]" fill="none" stroke="#fff" strokeWidth="1.300">
          <path d="M0.500 6.500L6 1l5.500 5.500" />
        </svg>
      </button>
    </div>
  </div>
);

export default function App() {
  return (
    <div
      dir="rtl"
      lang="he"
      className="flex flex-col h-screen overflow-hidden bg-white text-black text-xs leading-4 font-['Open_Sans','Noto_Sans',sans-serif]"
    >
      <TitleBar />
      <TabStrip />
      <Ribbon />
      <AddressRow />
      <ShellToolbar />
      <div className="flex flex-1 min-h-0 pl-px">
        <NavPane />
        <FileList />
        <Scrollbar gap="h-0" thumb="h-[143px]" />
      </div>
      <ItemBar />
      <StatusBar />
      <Taskbar />
    </div>
  );
}
